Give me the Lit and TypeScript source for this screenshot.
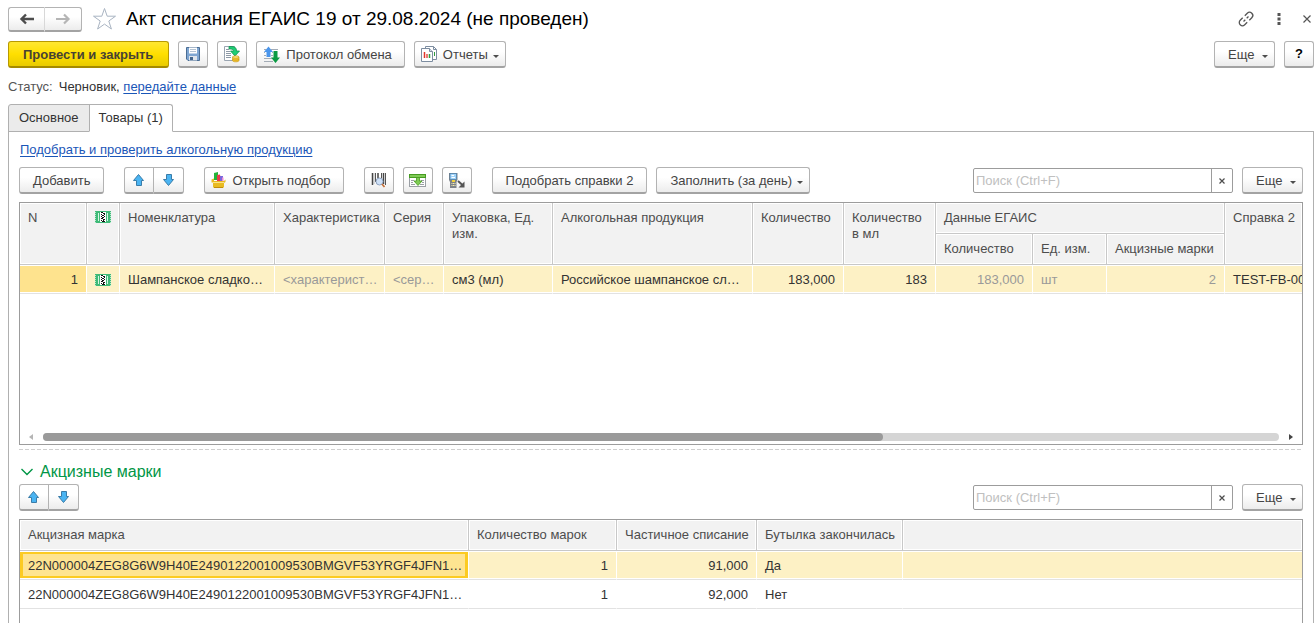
import { LitElement, html, css, nothing } from "lit";
import { customElement, property } from "lit/decorators.js";
import { classMap } from "lit/directives/class-map.js";

const arrowUp = html`<svg class="ic" width="16" height="16" viewBox="0 0 16 16" aria-hidden="true">
  <path d="M7.5 2.5 L12.5 8.5 H10.5 V13.5 H5.5 V8.5 H2.5 Z" fill="#4ab4f2" stroke="#3a7ca8" stroke-linejoin="round" /></svg>`;
const arrowDown = html`<svg class="ic" width="16" height="16" viewBox="0 0 16 16" aria-hidden="true">
  <path d="M7.5 13.5 L2.5 7.5 H5.5 V2.5 H10.5 V7.5 H12.5 Z" fill="#4ab4f2" stroke="#3a7ca8" stroke-linejoin="round" /></svg>`;
const caret = html`<svg class="caret" width="6" height="3" viewBox="0 0 6 3" aria-hidden="true"><path d="M0 0H6L3 3Z" fill="#4d4d4d" /></svg>`;

const navBack = html`<svg width="16" height="12" viewBox="0 0 16 12" aria-hidden="true">
  <path d="M7 1.5L2.5 6L7 10.5M3 6H15" fill="none" stroke="#4d4d4d" stroke-width="2.4" /></svg>`;
const navForward = html`<svg width="16" height="12" viewBox="0 0 16 12" aria-hidden="true">
  <path d="M9 1.5L13.5 6L9 10.5M13 6H1" fill="none" stroke="#b5b5b5" stroke-width="2.2" /></svg>`;
const star = html`<svg width="25" height="24" viewBox="0 0 25 24" aria-hidden="true">
  <path d="M12.5 1.5L15.2 9.2H23.5L16.8 14L19.4 22L12.5 17.1L5.6 22L8.2 14L1.5 9.2H9.8Z" fill="#fff" stroke="#a9b4c2" /></svg>`;
const link = html`<svg width="18" height="18" viewBox="0 0 18 18" aria-hidden="true">
  <g transform="rotate(-45 9 9)" fill="none" stroke="#555" stroke-width="1.3">
    <path d="M7.500 5.800H4A3.200 3.200 0 0 0 4 12.200H7.500M10.500 5.800H14A3.200 3.200 0 0 1 14 12.200H10.500M5.500 9H8M10 9H12.500" /></g></svg>`;
const dots = html`<svg width="8" height="12" viewBox="0 0 8 12" aria-hidden="true">
  <path d="M2.500 0H5.500V3H2.500ZM2.500 4.500H5.500V7.500H2.500ZM2.500 9H5.500V12H2.500Z" fill="#555" /></svg>`;
const cross = html`<svg width="8" height="8" viewBox="0 0 8 8" aria-hidden="true">
  <path d="M0.5 0.5L7.5 7.5M7.5 0.5L0.5 7.5" stroke="#555" stroke-width="1.2" /></svg>`;
const crossSmall = html`<svg width="6" height="6" viewBox="0 0 6 6" aria-hidden="true">
  <path d="M0.5 0.5L5.5 5.5M5.5 0.5L0.5 5.5" stroke="#4d4d4d" stroke-width="1.2" /></svg>`;

const floppy = html`<svg class="ic" width="16" height="16" viewBox="0 0 16 16" aria-hidden="true">
  <path d="M1.500 1.500H14.500V14.500H3L1.500 13Z" fill="#7fa6d2" stroke="#4a6d94" />
  <rect x="4" y="1.500" width="8" height="6" fill="#fff" />
  <path d="M5 3.500H11M5 5.500H11" stroke="#b4c3d3" />
  <rect x="4" y="10" width="8" height="4.500" fill="#dfe5ec" />
  <rect x="5" y="11" width="3" height="3" fill="#43658c" /></svg>`;
const docPost = html`<svg class="ic" width="18" height="18" viewBox="0 0 18 18" aria-hidden="true">
  <path d="M1.500 1.500H11.500V15.500H1.500Z" fill="#fff" stroke="#9aa5b1" />
  <path d="M3 4.500H6M3 6.500H7M3 8.500H8M3 10.500H8M3 12.500H8" stroke="#8d99a6" />
  <path d="M6 1.500H9C12 1.500 13.500 3 13.500 6H16.500L12 11L7.500 6H10.500C10.500 4.500 9.500 4 6 4Z" fill="#1fce74" stroke="#149150" stroke-width="0.8" />
  <path d="M9.500 12V15.500C9.500 17.300 16 17.300 16 15.500V12Z" fill="#f4c430" stroke="#c59412" stroke-width="0.6" />
  <ellipse cx="12.750" cy="12" rx="3.250" ry="1.200" fill="#ffe680" stroke="#c59412" stroke-width="0.6" />
  <path d="M9.500 14C9.500 15.500 16 15.500 16 14" fill="none" stroke="#c59412" stroke-width="0.6" /></svg>`;
const exchange = html`<svg class="ic" width="18" height="18" viewBox="0 0 18 18" aria-hidden="true">
  <path d="M1 3.500H3M8 3.500H15M1 6.500H2M9 6.500H10M1 9.500H3M8 9.500H10M1 12.500H9M1 15.500H10" stroke="#a3acb6" stroke-width="1.2" />
  <path d="M5.500 0.500L10 6H7.500V11H3.500V6H1Z" fill="#4b96ec" />
  <path d="M10.500 5H14.500V11.500H17L12.500 17L8 11.500H10.500Z" fill="#0b9a43" /></svg>`;
const reports = html`<svg class="ic" width="17" height="17" viewBox="0 0 17 17" aria-hidden="true">
  <path d="M4.500 0.500H12.500L15.500 3.500V13.500H4.500Z" fill="#fff" stroke="#7d8da0" />
  <path d="M12.500 0.500V3.500H15.500" fill="none" stroke="#7d8da0" /><path d="M13.500 6V10" stroke="#2f9e3e" />
  <path d="M0.500 2.500H8.500L11.500 5.500V15.500H0.500Z" fill="#fff" stroke="#7d8da0" />
  <path d="M8.500 2.500V5.500H11.500" fill="#d5dce4" stroke="#7d8da0" />
  <path d="M3.500 6V12" stroke="#e0352b" stroke-width="1.500" /><path d="M6 8V12" stroke="#e0352b" stroke-width="1.300" />
  <path d="M8.500 8V12" stroke="#2f9e3e" stroke-width="1.500" /></svg>`;
const pick = html`<svg class="ic" width="16" height="17" viewBox="0 0 16 17" aria-hidden="true">
  <path d="M3 1L7 0V8H3Z" fill="#23b53a" /><path d="M6 3L9 2.500L10 9H6Z" fill="#ea3a4b" />
  <path d="M9 4H12V9H9Z" fill="#7a68dc" /><path d="M11 5.500H12.500V9H11Z" fill="#f08ad0" />
  <path d="M0.500 7.500L3 6.500V9H13L14.500 7.500V10L13 11V15L12 16H3L2 15V10.500H0.500Z" fill="#e9bb22" />
  <path d="M2 10.500H13" stroke="#fbe587" /><path d="M3 15.500H12" stroke="#c18d0c" /></svg>`;
const barcode = html`<svg class="ic" width="16" height="16" viewBox="0 0 16 16" aria-hidden="true">
  <path d="M1.500 1V13M7 1V6M12.500 1V12" stroke="#444" stroke-width="1.500" />
  <path d="M4.500 1V10M10.500 1V6M14.500 1V13" stroke="#555" /><path d="M3 1V12" stroke="#aaa" stroke-width="0.8" />
  <circle cx="8.500" cy="9.500" r="3.500" fill="#cfe1f7" stroke="#8fa3c0" />
  <path d="M11 12L13.500 15" stroke="#c4713a" stroke-width="1.8" /></svg>`;
const fillTable = html`<svg class="ic" width="17" height="15" viewBox="0 0 17 15" aria-hidden="true">
  <rect x="0.500" y="1.500" width="16" height="12" fill="#fff" stroke="#9a9fa4" />
  <rect x="0.500" y="1.500" width="16" height="3" fill="#7fcb55" stroke="#469b22" />
  <path d="M2 7.500H5M12 7.500H15M2 9.500H4M13 9.500H15M2 11.500H6M11 11.500H15" stroke="#9a9fa4" />
  <path d="M7.500 4.500H10.500V8H13L9 12.500L5 8H7.500Z" fill="#7fcb55" stroke="#479a20" stroke-width="0.8" /></svg>`;
const terminal = html`<svg class="ic" width="18" height="17" viewBox="0 0 18 17" aria-hidden="true">
  <path d="M1 1H9.500V8L8.500 10V16H2V10L1 8Z" fill="#7e8389" />
  <rect x="2" y="1.500" width="6.500" height="6" fill="#9ed3fa" stroke="#4a7ca6" stroke-width="0.7" />
  <path d="M3.500 3.500H6M3.500 5.500H7" stroke="#fff" />
  <path d="M4 9H7" stroke="#f2d13a" stroke-width="2" />
  <path d="M3.500 11.500H7.500M3.500 13.500H7.500" stroke="#f6ecae" stroke-dasharray="1 0.500" />
  <path d="M10 9L14.500 13" stroke="#555" stroke-width="2" /><path d="M16.500 9.500V15.500H10.500Z" fill="#555" /></svg>`;
const stamp = html`<svg class="stamp" width="16" height="12" viewBox="0 0 16 12" role="img" aria-label="Марка">
  <rect width="16" height="12" fill="#3fba78" />
  <path d="M0.500 1V12M15.500 1V12" stroke="#b9e8cd" stroke-dasharray="1 1" />
  <path d="M3.500 2V10M12.500 2V10" stroke="#d8f4e4" />
  <rect x="5" y="1" width="6" height="10" fill="#fff" />
  <path d="M6 1.500H8M8 2.500H10M6 3.500H7M9 3.500H10M7 4.500H9M6 5.500H7M9 5.500H10M7 6.500H9M6 7.500H8M8 8.500H10M6 9.500H7M8 9.500H9M7 10.500H10" stroke="#111" /></svg>`;

const base = css`
  * { box-sizing: border-box; }
  button, input { font: inherit; color: inherit; margin: 0; }
  .btn {
    display: inline-flex; align-items: center; justify-content: center; flex: none;
    height: 27px; padding: 1px 13px 0; white-space: nowrap; color: #444;
    border: 1px solid #b3b3b3; border-bottom: 2px solid #a3a3a3; border-radius: 3px;
    background: linear-gradient(#fff 40%, #ececec);
  }
  .btn.drop { padding-right: 6px; gap: 5px; }
  .btn.with-icon { padding-left: 6px; padding-right: 12px; gap: 5px; }
  .btn.with-icon.drop { padding-right: 6px; }
  .btn.square { width: 30px; padding: 0; }
  .btn.more { min-width: 61px; justify-content: space-between; }
  .btn .caret { margin-top: 3px; }
  .pair { display: flex; flex: none; }
  .pair .btn:first-child { border-radius: 3px 0 0 3px; }
  .pair .btn:last-child { border-radius: 0 3px 3px 0; border-left: 0; }
  svg { display: block; flex: none; }
`;

@customElement("search-field")
class SearchField extends LitElement {
  static styles = [base, css`
    :host { display: flex; flex: 0 1 260px; height: 25px; }
    .box { display: flex; flex: 1; border: 1px solid #9c9c9c; border-radius: 2px; background: #fff; overflow: hidden; }
    .input { flex: 1; min-width: 0; border: 0; outline: 0; padding: 0 2px; background: none; }
    .input::placeholder { color: #c0c0c0; opacity: 1; }
    .clear { width: 21px; border: 0; border-left: 1px solid #9c9c9c; background: none; padding: 0; display: grid; place-items: center; }
  `];
  render() {
    return html`<div class="box">
      <input class="input" type="text" aria-label="Поиск" placeholder="Поиск (Ctrl+F)" />
      <button class="clear" aria-label="Очистить">${crossSmall}</button>
    </div>`;
  }
}

interface Mark { code: string; count: string; part: string; empty: string; }

@customElement("app-root")
class AppRoot extends LitElement {
  static styles = [base, css`
    :host {
      display: flex; flex-direction: column; height: 100vh; overflow: hidden;
      background: #fff; color: #333; font: 13px/16px "Liberation Sans", Arial, sans-serif;
    }
    a { color: #1a56b8; text-decoration: underline; text-underline-offset: 2px; }
    .titlebar { display: flex; align-items: center; height: 38px; padding: 0 5px 0 8px; flex: none; }
    .titlebar .btn { height: 25px; width: 37px; padding: 0; }
    .titlebar .pair .btn:first-child { border-right-color: #d8d8d8; }
    .plain { border: 0; background: none; padding: 0; display: grid; place-items: center; }
    .fav { margin: 0 9px 0 10px; }
    .title { margin: 0; flex: 1; font-size: 19px; line-height: 24px; font-weight: 400; color: #000; white-space: nowrap; }
    .window { display: flex; align-items: center; gap: 20px; }
    .commands { display: flex; gap: 9px; padding: 3px 2px 0 8px; flex: none; }
    .btn.primary {
      padding: 1px 15px 0 14px;
      font-weight: 700; border-color: #b89a00; border-bottom-color: #a58a00; color: #474234;
      background: linear-gradient(#ffe732, #ffdf00 50%, #e9cb00);
    }
    .help { color: #000; font-weight: 700; }
    .spacer { flex: 1; }
    .status { display: flex; gap: 6px; padding: 11px 8px 9px; flex: none; }
    .status .label { color: #555; }
    .tabs { display: flex; padding-left: 8px; flex: none; }
    .tab {
      height: 28px; padding: 0 10px; border: 1px solid #b0b0b0; background: #ebebeb; border-radius: 3px 0 0 0;
    }
    .tab.active { background: #fff; border-bottom-color: #fff; border-radius: 0 3px 0 0; margin-left: -1px; padding: 0 9px; z-index: 1; }
    .panel {
      flex: 1; min-height: 0; display: flex; flex-direction: column; margin: -1px 2px 0 8px;
      border: 1px solid #b0b0b0; border-bottom: 0; padding: 10px 10px 0;
    }
    .pick-link { align-self: flex-start; margin-left: 1px; }
    .tools { display: flex; align-items: center; gap: 20px; flex: none; }
    .tools .group { display: flex; gap: 9px; }
    .tools .search { flex: 1; display: flex; justify-content: flex-end; align-items: center; gap: 9px; }
    .tools.goods { margin: 9px 0 8px; }
    .tools.marks { margin: 3px 0 8px; }
    .grid { border: 1px solid #9c9c9c; flex: none; display: flex; flex-direction: column; overflow: hidden; }
    .grid.goods { height: 243px; }
    .grid.marks { flex: 1 0 0; border-bottom: 0; }
    .table { border-collapse: separate; border-spacing: 0; table-layout: fixed; width: 100%; }
    th, td { padding: 0 0 0 8px; text-align: left; white-space: nowrap; overflow: hidden; font-weight: 400; }
    th {
      height: 31px; color: #4d4d4d; background: #f2f2f2; border-right: 1px solid #c8c8c8; border-bottom: 1px solid #c8c8c8;
      box-shadow: inset 0 0 0 1px #fff; vertical-align: top; padding-top: 7px; padding-right: 4px; white-space: normal;
    }
    td { height: 29px; border-bottom: 1px solid #e2e2e2; border-right: 1px solid #fff; padding-top: 1px; }
    .current td { background: #fdf1c5; box-shadow: inset 0 1px #fff, inset 0 -1px #fff; }
    .num { text-align: right; padding-right: 8px; }
    .row td.muted { color: #999; }
    .current td.active { background: #fee38e; }
    .current td.focus { background: #fee491; box-shadow: inset 0 1px #fff, inset 0 -1px #fff, inset 0 0 0 3px #fccb22; }
    th.edge, td:last-child { border-right: 0; }
    .stamp { margin-top: 1px; }
    .scroll { margin-top: auto; display: flex; align-items: center; gap: 10px; padding: 0 9px 3px; }
    .track { flex: 1; height: 8px; border-radius: 4px; background: #d5d5d5; }
    .thumb { height: 8px; border-radius: 4px; background: #9a9a9a; }
    .divider { height: 1px; flex: none; margin: 4px 0 13px; background: repeating-linear-gradient(90deg, #cfcfcf 0 4px, #fff 4px 6px); }
    .section { margin: 0; font-size: 16px; line-height: 18px; font-weight: 400; color: #009646; flex: none; }
    .toggle { display: flex; align-items: center; gap: 7px; border: 0; background: none; padding: 0 0 0 2px; }
  `];

  @property({ type: Number }) scrolled = 68;

  private marks: Mark[] = [
    { code: "22N000004ZEG8G6W9H40E2490122001009530BMGVF53YRGF4JFN1…", count: "1", part: "91,000", empty: "Да" },
    { code: "22N000004ZEG8G6W9H40E2490122001009530BMGVF53YRGF4JFN1…", count: "1", part: "92,000", empty: "Нет" },
  ];

  private cols(widths: number[]) {
    return html`<colgroup>${widths.map((w) => html`<col style="width:${w}px" />`)}<col /></colgroup>`;
  }

  private movers() {
    return html`<div class="pair">
      <button class="btn square" aria-label="Переместить вверх">${arrowUp}</button>
      <button class="btn square" aria-label="Переместить вниз">${arrowDown}</button>
    </div>`;
  }

  private searchTools() {
    return html`<div class="search"><search-field></search-field>
      <button class="btn drop more">Еще ${caret}</button></div>`;
  }

  render() {
    return html`
      <header class="titlebar">
        <div class="pair">
          <button class="btn" aria-label="Назад">${navBack}</button>
          <button class="btn" aria-label="Вперед">${navForward}</button>
        </div>
        <button class="plain fav" aria-label="В избранное">${star}</button>
        <h1 class="title">Акт списания ЕГАИС 19 от 29.08.2024 (не проведен)</h1>
        <div class="window">
          <button class="plain" aria-label="Ссылка">${link}</button>
          <button class="plain" aria-label="Меню">${dots}</button>
          <button class="plain" aria-label="Закрыть">${cross}</button>
        </div>
      </header>
      <div class="commands">
        <button class="btn primary">Провести и закрыть</button>
        <button class="btn square" aria-label="Записать">${floppy}</button>
        <button class="btn square" aria-label="Провести">${docPost}</button>
        <button class="btn with-icon">${exchange}Протокол обмена</button>
        <button class="btn with-icon drop">${reports}Отчеты ${caret}</button>
        <span class="spacer"></span>
        <button class="btn drop more">Еще ${caret}</button>
        <button class="btn square help">?</button>
      </div>
      <div class="status"><span class="label">Статус:</span><span>Черновик, <a href="#">передайте данные</a></span></div>
      <div class="tabs" role="tablist">
        <button class="tab" role="tab">Основное</button>
        <button class="tab active" role="tab" aria-selected="true">Товары (1)</button>
      </div>
      <main class="panel">
        <a class="pick-link" href="#">Подобрать и проверить алкогольную продукцию</a>
        <div class="tools goods">
          <button class="btn">Добавить</button>
          ${this.movers()}
          <button class="btn with-icon">${pick}Открыть подбор</button>
          <div class="group">
            <button class="btn square" aria-label="Поиск по штрихкоду">${barcode}</button>
            <button class="btn square" aria-label="Загрузить из файла">${fillTable}</button>
            <button class="btn square" aria-label="Загрузить из терминала">${terminal}</button>
          </div>
          <div class="group">
            <button class="btn">Подобрать справки 2</button>
            <button class="btn drop">Заполнить (за день) ${caret}</button>
          </div>
          ${this.searchTools()}
        </div>
        <div class="grid goods">
          <table class="table">
            ${this.cols([67, 33, 155, 110, 59, 109, 200, 91, 92, 97, 74, 118])}
            <thead>
              <tr>
                <th rowspan="2">N</th><th rowspan="2">${stamp}</th><th rowspan="2">Номенклатура</th>
                <th rowspan="2">Характеристика</th><th rowspan="2">Серия</th><th rowspan="2">Упаковка, Ед. изм.</th>
                <th rowspan="2">Алкогольная продукция</th><th rowspan="2">Количество</th><th rowspan="2">Количество в&nbsp;мл</th>
                <th colspan="3">Данные ЕГАИС</th><th class="edge" rowspan="2">Справка 2</th>
              </tr>
              <tr><th>Количество</th><th>Ед. изм.</th><th>Акцизные марки</th></tr>
            </thead>
            <tbody>
              <tr class="row current">
                <td class="num active">1</td><td>${stamp}</td><td>Шампанское сладко…</td>
                <td class="muted">&lt;характерист…</td><td class="muted">&lt;сер…</td><td>см3 (мл)</td>
                <td>Российское шампанское сл…</td><td class="num">183,000</td><td class="num">183</td>
                <td class="num muted">183,000</td><td class="muted">шт</td><td class="num muted">2</td><td>TEST-FB-00</td>
              </tr>
            </tbody>
          </table>
          <div class="scroll">
            <svg width="4" height="6" viewBox="0 0 4 6" aria-hidden="true"><path d="M4 0V6L0 3Z" fill="#b5b5b5" /></svg>
            <div class="track"><div class="thumb" style="width:${this.scrolled}%"></div></div>
            <svg width="4" height="6" viewBox="0 0 4 6" aria-hidden="true"><path d="M0 0V6L4 3Z" fill="#444" /></svg>
          </div>
        </div>
        <div class="divider"></div>
        <h2 class="section"><button class="toggle" aria-expanded="true">
          <svg width="12" height="8" viewBox="0 0 12 8" aria-hidden="true"><path d="M0.500 1L6 6.500L11.500 1" fill="none" stroke="#009646" stroke-width="1.400" /></svg>
          Акцизные марки</button></h2>
        <div class="tools marks">${this.movers()}${this.searchTools()}</div>
        <div class="grid marks">
          <table class="table">
            ${this.cols([449, 148, 140, 146])}
            <thead>
              <tr><th>Акцизная марка</th><th>Количество марок</th><th>Частичное списание</th><th>Бутылка закончилась</th><th class="edge"></th></tr>
            </thead>
            <tbody>
              ${this.marks.map((m, i) => html`<tr class=${classMap({ row: true, current: i === 0 })}>
                <td class=${i === 0 ? "focus" : nothing}>${m.code}</td><td class="num">${m.count}</td>
                <td class="num">${m.part}</td><td>${m.empty}</td><td></td></tr>`)}
            </tbody>
          </table>
        </div>
      </main>`;
  }
}
